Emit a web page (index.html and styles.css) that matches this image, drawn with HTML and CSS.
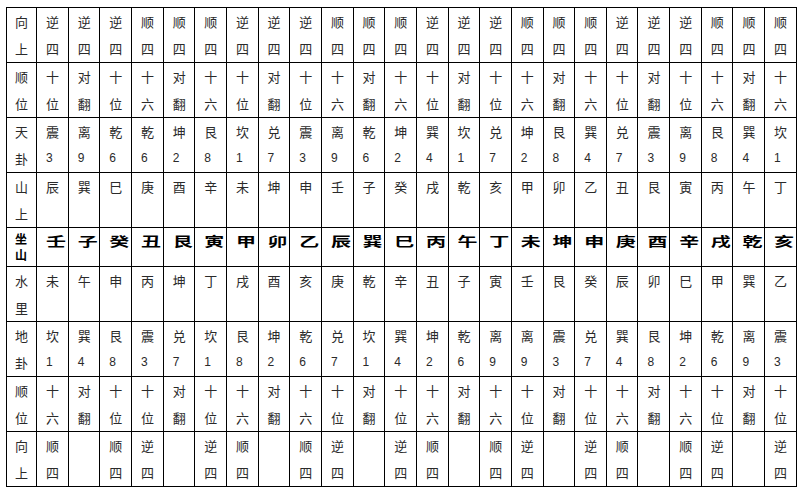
FILE: index.html
```html
<!DOCTYPE html>
<html lang="zh-CN">
<head>
<meta charset="utf-8">
<title>向上 顺位 天卦</title>
<link rel="stylesheet" href="styles.css">
</head>
<body>
<table class="grid">
<colgroup><col class="c-label"></colgroup>
<tr class="row">
<td class="lab"><div class="c">向<br>上</div></td>
<td><div class="c">逆<br>四</div></td><td><div class="c">逆<br>四</div></td><td><div class="c">逆<br>四</div></td><td><div class="c">顺<br>四</div></td><td><div class="c">顺<br>四</div></td><td><div class="c">顺<br>四</div></td>
<td><div class="c">逆<br>四</div></td><td><div class="c">逆<br>四</div></td><td><div class="c">逆<br>四</div></td><td><div class="c">顺<br>四</div></td><td><div class="c">顺<br>四</div></td><td><div class="c">顺<br>四</div></td>
<td><div class="c">逆<br>四</div></td><td><div class="c">逆<br>四</div></td><td><div class="c">逆<br>四</div></td><td><div class="c">顺<br>四</div></td><td><div class="c">顺<br>四</div></td><td><div class="c">顺<br>四</div></td>
<td><div class="c">逆<br>四</div></td><td><div class="c">逆<br>四</div></td><td><div class="c">逆<br>四</div></td><td><div class="c">顺<br>四</div></td><td><div class="c">顺<br>四</div></td><td><div class="c">顺<br>四</div></td>
</tr>
<tr class="row">
<td class="lab"><div class="c">顺<br>位</div></td>
<td><div class="c">十<br>位</div></td><td><div class="c">对<br>翻</div></td><td><div class="c">十<br>位</div></td><td><div class="c">十<br>六</div></td><td><div class="c">对<br>翻</div></td><td><div class="c">十<br>六</div></td>
<td><div class="c">十<br>位</div></td><td><div class="c">对<br>翻</div></td><td><div class="c">十<br>位</div></td><td><div class="c">十<br>六</div></td><td><div class="c">对<br>翻</div></td><td><div class="c">十<br>六</div></td>
<td><div class="c">十<br>位</div></td><td><div class="c">对<br>翻</div></td><td><div class="c">十<br>位</div></td><td><div class="c">十<br>六</div></td><td><div class="c">对<br>翻</div></td><td><div class="c">十<br>六</div></td>
<td><div class="c">十<br>位</div></td><td><div class="c">对<br>翻</div></td><td><div class="c">十<br>位</div></td><td><div class="c">十<br>六</div></td><td><div class="c">对<br>翻</div></td><td><div class="c">十<br>六</div></td>
</tr>
<tr class="row">
<td class="lab"><div class="c">天<br>卦</div></td>
<td><div class="c">震<br><span class="n">3</span></div></td><td><div class="c">离<br><span class="n">9</span></div></td><td><div class="c">乾<br><span class="n">6</span></div></td><td><div class="c">乾<br><span class="n">6</span></div></td><td><div class="c">坤<br><span class="n">2</span></div></td><td><div class="c">艮<br><span class="n">8</span></div></td>
<td><div class="c">坎<br><span class="n">1</span></div></td><td><div class="c">兑<br><span class="n">7</span></div></td><td><div class="c">震<br><span class="n">3</span></div></td><td><div class="c">离<br><span class="n">9</span></div></td><td><div class="c">乾<br><span class="n">6</span></div></td><td><div class="c">坤<br><span class="n">2</span></div></td>
<td><div class="c">巽<br><span class="n">4</span></div></td><td><div class="c">坎<br><span class="n">1</span></div></td><td><div class="c">兑<br><span class="n">7</span></div></td><td><div class="c">坤<br><span class="n">2</span></div></td><td><div class="c">艮<br><span class="n">8</span></div></td><td><div class="c">巽<br><span class="n">4</span></div></td>
<td><div class="c">兑<br><span class="n">7</span></div></td><td><div class="c">震<br><span class="n">3</span></div></td><td><div class="c">离<br><span class="n">9</span></div></td><td><div class="c">艮<br><span class="n">8</span></div></td><td><div class="c">巽<br><span class="n">4</span></div></td><td><div class="c">坎<br><span class="n">1</span></div></td>
</tr>
<tr class="row">
<td class="lab"><div class="c">山<br>上</div></td>
<td><div class="c">辰</div></td><td><div class="c">巽</div></td><td><div class="c">巳</div></td><td><div class="c">庚</div></td><td><div class="c">酉</div></td><td><div class="c">辛</div></td>
<td><div class="c">未</div></td><td><div class="c">坤</div></td><td><div class="c">申</div></td><td><div class="c">壬</div></td><td><div class="c">子</div></td><td><div class="c">癸</div></td>
<td><div class="c">戌</div></td><td><div class="c">乾</div></td><td><div class="c">亥</div></td><td><div class="c">甲</div></td><td><div class="c">卯</div></td><td><div class="c">乙</div></td>
<td><div class="c">丑</div></td><td><div class="c">艮</div></td><td><div class="c">寅</div></td><td><div class="c">丙</div></td><td><div class="c">午</div></td><td><div class="c">丁</div></td>
</tr>
<tr class="zuo">
<td class="lab"><div class="c">坐<br>山</div></td>
<td><div class="c"><span class="big">壬</span></div></td><td><div class="c"><span class="big">子</span></div></td><td><div class="c"><span class="big">癸</span></div></td><td><div class="c"><span class="big">丑</span></div></td><td><div class="c"><span class="big">艮</span></div></td><td><div class="c"><span class="big">寅</span></div></td>
<td><div class="c"><span class="big">甲</span></div></td><td><div class="c"><span class="big">卯</span></div></td><td><div class="c"><span class="big">乙</span></div></td><td><div class="c"><span class="big">辰</span></div></td><td><div class="c"><span class="big">巽</span></div></td><td><div class="c"><span class="big">巳</span></div></td>
<td><div class="c"><span class="big">丙</span></div></td><td><div class="c"><span class="big">午</span></div></td><td><div class="c"><span class="big">丁</span></div></td><td><div class="c"><span class="big">未</span></div></td><td><div class="c"><span class="big">坤</span></div></td><td><div class="c"><span class="big">申</span></div></td>
<td><div class="c"><span class="big">庚</span></div></td><td><div class="c"><span class="big">酉</span></div></td><td><div class="c"><span class="big">辛</span></div></td><td><div class="c"><span class="big">戌</span></div></td><td><div class="c"><span class="big">乾</span></div></td><td><div class="c"><span class="big">亥</span></div></td>
</tr>
<tr class="row">
<td class="lab"><div class="c">水<br>里</div></td>
<td><div class="c">未</div></td><td><div class="c">午</div></td><td><div class="c">申</div></td><td><div class="c">丙</div></td><td><div class="c">坤</div></td><td><div class="c">丁</div></td>
<td><div class="c">戌</div></td><td><div class="c">酉</div></td><td><div class="c">亥</div></td><td><div class="c">庚</div></td><td><div class="c">乾</div></td><td><div class="c">辛</div></td>
<td><div class="c">丑</div></td><td><div class="c">子</div></td><td><div class="c">寅</div></td><td><div class="c">壬</div></td><td><div class="c">艮</div></td><td><div class="c">癸</div></td>
<td><div class="c">辰</div></td><td><div class="c">卯</div></td><td><div class="c">巳</div></td><td><div class="c">甲</div></td><td><div class="c">巽</div></td><td><div class="c">乙</div></td>
</tr>
<tr class="row">
<td class="lab"><div class="c">地<br>卦</div></td>
<td><div class="c">坎<br><span class="n">1</span></div></td><td><div class="c">巽<br><span class="n">4</span></div></td><td><div class="c">艮<br><span class="n">8</span></div></td><td><div class="c">震<br><span class="n">3</span></div></td><td><div class="c">兑<br><span class="n">7</span></div></td><td><div class="c">坎<br><span class="n">1</span></div></td>
<td><div class="c">艮<br><span class="n">8</span></div></td><td><div class="c">坤<br><span class="n">2</span></div></td><td><div class="c">乾<br><span class="n">6</span></div></td><td><div class="c">兑<br><span class="n">7</span></div></td><td><div class="c">坎<br><span class="n">1</span></div></td><td><div class="c">巽<br><span class="n">4</span></div></td>
<td><div class="c">坤<br><span class="n">2</span></div></td><td><div class="c">乾<br><span class="n">6</span></div></td><td><div class="c">离<br><span class="n">9</span></div></td><td><div class="c">离<br><span class="n">9</span></div></td><td><div class="c">震<br><span class="n">3</span></div></td><td><div class="c">兑<br><span class="n">7</span></div></td>
<td><div class="c">巽<br><span class="n">4</span></div></td><td><div class="c">艮<br><span class="n">8</span></div></td><td><div class="c">坤<br><span class="n">2</span></div></td><td><div class="c">乾<br><span class="n">6</span></div></td><td><div class="c">离<br><span class="n">9</span></div></td><td><div class="c">震<br><span class="n">3</span></div></td>
</tr>
<tr class="row">
<td class="lab"><div class="c">顺<br>位</div></td>
<td><div class="c">十<br>六</div></td><td><div class="c">对<br>翻</div></td><td><div class="c">十<br>位</div></td><td><div class="c">十<br>位</div></td><td><div class="c">对<br>翻</div></td><td><div class="c">十<br>位</div></td>
<td><div class="c">十<br>六</div></td><td><div class="c">对<br>翻</div></td><td><div class="c">十<br>六</div></td><td><div class="c">十<br>位</div></td><td><div class="c">对<br>翻</div></td><td><div class="c">十<br>位</div></td>
<td><div class="c">十<br>六</div></td><td><div class="c">对<br>翻</div></td><td><div class="c">十<br>六</div></td><td><div class="c">十<br>位</div></td><td><div class="c">对<br>翻</div></td><td><div class="c">十<br>位</div></td>
<td><div class="c">十<br>六</div></td><td><div class="c">对<br>翻</div></td><td><div class="c">十<br>六</div></td><td><div class="c">十<br>位</div></td><td><div class="c">对<br>翻</div></td><td><div class="c">十<br>位</div></td>
</tr>
<tr class="row">
<td class="lab"><div class="c">向<br>上</div></td>
<td><div class="c">顺<br>四</div></td><td><div class="c"></div></td><td><div class="c">顺<br>四</div></td><td><div class="c">逆<br>四</div></td><td><div class="c"></div></td><td><div class="c">逆<br>四</div></td>
<td><div class="c">顺<br>四</div></td><td><div class="c"></div></td><td><div class="c">顺<br>四</div></td><td><div class="c">逆<br>四</div></td><td><div class="c"></div></td><td><div class="c">逆<br>四</div></td>
<td><div class="c">顺<br>四</div></td><td><div class="c"></div></td><td><div class="c">顺<br>四</div></td><td><div class="c">逆<br>四</div></td><td><div class="c"></div></td><td><div class="c">逆<br>四</div></td>
<td><div class="c">顺<br>四</div></td><td><div class="c"></div></td><td><div class="c">顺<br>四</div></td><td><div class="c">逆<br>四</div></td><td><div class="c"></div></td><td><div class="c">逆<br>四</div></td>
</tr>
</table>
</body>
</html>
```
FILE: styles.css
```css
html, body {
  margin: 0;
  padding: 0;
  background: #fff;
}
body {
  padding: 7px 0 0 6px;
  font-family: "Noto Sans CJK SC", "Liberation Sans", sans-serif;
  color: #2a2a2a;
}
.grid {
  border-collapse: collapse;
  table-layout: fixed;
  width: 791px;
}
.c-label {
  width: 30px;
}
.grid td {
  border: 1px solid #000;
  padding: 0;
  vertical-align: top;
  text-align: left;
}
.c {
  box-sizing: border-box;
  height: 54px;
  padding: 0 0 0 9px;
  overflow: hidden;
  font-size: 13px;
  line-height: 27px;
  white-space: nowrap;
}
.lab .c {
  padding-left: 8px;
}
.zuo .c {
  height: 38px;
  line-height: 26px;
  overflow: visible;
}
.zuo .lab .c {
  font-weight: bold;
  color: #000;
  font-size: 12px;
  line-height: 16px;
  padding-top: 3px;
}
.n {
  font-family: "Liberation Sans", sans-serif;
  font-size: 12px;
  vertical-align: top;
}
.big {
  display: inline-block;
  vertical-align: top;
  line-height: 26px;
  font-size: 20px;
  font-weight: bold;
  color: #000;
  transform: scale(1, 0.64);
}
```
